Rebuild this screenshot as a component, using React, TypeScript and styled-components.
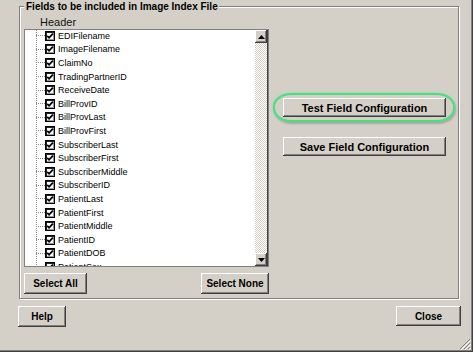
import React from "react";
import styled, { createGlobalStyle } from "styled-components";

const Global = createGlobalStyle`
  html, body { margin: 0; padding: 0; background: #d4d0c8; }
  body { width: 473px; height: 352px; overflow: hidden; font-family: Arial, "Liberation Sans", sans-serif; }
  #root { width: 473px; height: 352px; }
`;

const Window = styled.div`
  position: relative;
  width: 473px;
  height: 352px;
  box-sizing: border-box;
  background: #d4d0c8;
  padding: 0 14px 0 19px;
  display: flex;
  flex-direction: column;
  box-shadow: inset -1px -1px 0 #404040, inset -2px -2px 0 #808080;
`;

const Group = styled.fieldset`
  margin: 0;
  padding: 3px 11px 4px 4px;
  min-width: 0;
  width: 440px;
  box-sizing: border-box;
  border: 1px solid #808080;
  box-shadow: inset 1px 1px 0 #fff, 1px 1px 0 #fff;
`;

const Legend = styled.legend`
  padding: 0 1px 0 2px;
  font: bold 10px/13px Arial, "Liberation Sans", sans-serif;
  color: #000;
  background: #d4d0c8;
`;

const Body = styled.div`
  display: flex;
  gap: 14px;
`;

const LeftCol = styled.div`
  width: 245px;
  display: flex;
  flex-direction: column;
`;

const HeaderLabel = styled.div`
  font: 11px/13px Arial, "Liberation Sans", sans-serif;
  color: #111;
  padding-left: 16px;
`;

const ListBox = styled.div`
  height: 238px;
  box-sizing: border-box;
  border: 1px solid #808080;
  background: #fff;
  display: flex;
  overflow: hidden;
`;

const Tree = styled.div`
  flex: 1;
  overflow: hidden;
  background-image: linear-gradient(#8a8a8a 50%, transparent 50%);
  background-size: 1px 2px;
  background-position: 11px 0;
  background-repeat: repeat-y;
`;

const Items = styled.div`
  margin-top: -1px;
`;

const Row = styled.div`
  height: 13.6px;
  display: flex;
  align-items: center;
  padding-left: 11px;
  font: 9px Arial, "Liberation Sans", sans-serif;
  color: #000;
`;

const Branch = styled.span`
  width: 9px;
  height: 1px;
  background: repeating-linear-gradient(to right, #8a8a8a 0 1px, transparent 1px 2px);
`;

const Check = styled.span`
  width: 10px;
  height: 10px;
  box-sizing: border-box;
  border: 1px solid #000;
  box-shadow: inset 1px 1px 0 #222, inset -1px -1px 0 #999;
  background: #fff;
  display: flex;
  align-items: center;
  justify-content: center;
  flex: none;
`;

const Label = styled.span`
  margin-left: 3px;
  white-space: nowrap;
`;

const ScrollBar = styled.div`
  width: 12px;
  display: flex;
  flex-direction: column;
  background: repeating-conic-gradient(#d4d0c8 0 25%, #fff 0 50%) 0 0 / 2px 2px;
  border-right: 1px solid #404040;
`;

const ScrollBtn = styled.div`
  height: 13px;
  background: #d4d0c8;
  box-shadow: inset -1px -1px 0 #404040, inset 1px 1px 0 #fff, inset -2px -2px 0 #808080;
  display: flex;
  align-items: center;
  justify-content: center;
`;

const Track = styled.div`
  flex: 1;
`;

const ButtonRow = styled.div`
  display: flex;
  justify-content: space-between;
  margin-top: 6px;
`;

const Button = styled.button<{ $w: number; $h?: number; $fs?: number }>`
  width: ${(p) => p.$w}px;
  height: ${(p) => p.$h ?? 21}px;
  padding: 0;
  margin: 0;
  border: none;
  background: #d4d0c8;
  box-shadow: inset -1px -1px 0 #404040, inset 1px 1px 0 #fff, inset -2px -2px 0 #808080;
  font: bold ${(p) => p.$fs ?? 10}px Arial, "Liberation Sans", sans-serif;
  color: #000;
  display: flex;
  align-items: center;
  justify-content: center;
`;

const RightCol = styled.div`
  width: 163px;
  padding-top: 82px;
  display: flex;
  flex-direction: column;
  gap: 20px;
`;

const Highlight = styled.div`
  position: relative;
  display: flex;
  &::after {
    content: "";
    position: absolute;
    top: -5px;
    bottom: -5px;
    left: -10px;
    right: -9px;
    border: 2px solid #46e07c;
    border-radius: 18px / 14px;
    box-shadow: 0 0 2px rgba(70, 224, 124, 0.6), 1px 2px 2px rgba(0, 0, 0, 0.2);
    pointer-events: none;
  }
`;

const BottomRow = styled.div`
  display: flex;
  justify-content: space-between;
  margin: 7px -2px 0 -1px;
`;

const Grip = styled.svg`
  position: absolute;
  right: 2px;
  bottom: 2px;
`;

const fields = [
  "EDIFilename",
  "ImageFilename",
  "ClaimNo",
  "TradingPartnerID",
  "ReceiveDate",
  "BillProvID",
  "BillProvLast",
  "BillProvFirst",
  "SubscriberLast",
  "SubscriberFirst",
  "SubscriberMiddle",
  "SubscriberID",
  "PatientLast",
  "PatientFirst",
  "PatientMiddle",
  "PatientID",
  "PatientDOB",
  "PatientSex",
];

const CheckMark = () => (
  <svg width="8" height="8" viewBox="0 0 8 8">
    <path d="M1.2 3.8 L3.1 5.8 L6.9 1.6" fill="none" stroke="#000" strokeWidth="1.8" />
  </svg>
);

const Arrow = ({ up }: { up?: boolean }) => (
  <svg width="7" height="4" viewBox="0 0 7 4">
    <path d={up ? "M0 4 L3.5 0 L7 4 Z" : "M0 0 L7 0 L3.5 4 Z"} fill="#000" />
  </svg>
);

export default function App() {
  return (
    <>
      <Global />
      <Window>
        <Group>
          <Legend>Fields to be included in Image Index File</Legend>
          <Body>
            <LeftCol>
              <HeaderLabel>Header</HeaderLabel>
              <ListBox>
                <Tree>
                  <Items>
                    {fields.map((f) => (
                      <Row key={f}>
                        <Branch />
                        <Check>
                          <CheckMark />
                        </Check>
                        <Label>{f}</Label>
                      </Row>
                    ))}
                  </Items>
                </Tree>
                <ScrollBar>
                  <ScrollBtn>
                    <Arrow up />
                  </ScrollBtn>
                  <Track />
                  <ScrollBtn>
                    <Arrow />
                  </ScrollBtn>
                </ScrollBar>
              </ListBox>
              <ButtonRow>
                <Button $w={63}>Select All</Button>
                <Button $w={68}>Select None</Button>
              </ButtonRow>
            </LeftCol>
            <RightCol>
              <Highlight>
                <Button $w={163} $h={19} $fs={11}>
                  Test Field Configuration
                </Button>
              </Highlight>
              <Button $w={163} $h={19} $fs={11}>
                Save Field Configuration
              </Button>
            </RightCol>
          </Body>
        </Group>
        <BottomRow>
          <Button $w={48}>Help</Button>
          <Button $w={65} $h={20}>
            Close
          </Button>
        </BottomRow>
        <Grip width="12" height="12" viewBox="0 0 12 12">
          <path d="M11 1 L1 11 M11 5 L5 11 M11 9 L9 11" stroke="#808080" strokeWidth="1" />
          <path d="M12 2 L2 12 M12 6 L6 12 M12 10 L10 12" stroke="#fff" strokeWidth="1" />
        </Grip>
      </Window>
    </>
  );
}
